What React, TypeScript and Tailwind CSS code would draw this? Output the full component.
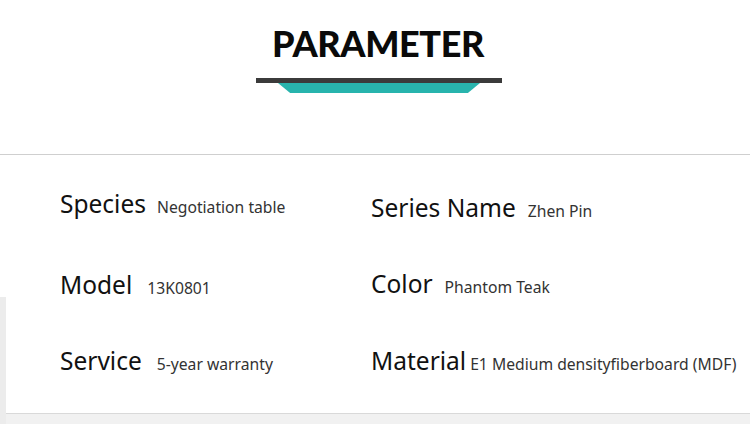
import React from "react";

const label = "font-['Noto_Sans',sans-serif] text-[24.5px] leading-[32px] text-[#111]";
const value = "font-['Noto_Sans',sans-serif] text-[15.7px] leading-[32px] text-[#333]";

function Cell({ k, v, gap, className = "" }: { k: string; v: string; gap: string; className?: string }) {
  return (
    <div className={`flex items-baseline ${className}`}>
      <span className={label}>{k}</span>
      <span className={`${value} ${gap}`}>{v}</span>
    </div>
  );
}

export default function App() {
  return (
    <div className="w-[750px] h-[424px] bg-white overflow-hidden flex flex-col">
      <div className="h-[155px] border-b border-[#cfcfcf] shrink-0">
        <div className="ml-[256px] w-[246px] flex flex-col items-center pt-[25px]">
          <h1 className="font-['Lato',sans-serif] font-black text-[36px] leading-[36px] text-[#0a0a0a] tracking-[-0.4px] ml-[-2px]">
            PARAMETER
          </h1>
          <div className="mt-[17px] w-full h-[5px] bg-[#3b3b3b]" />
          <div className="w-[202px] h-[10px] bg-[#28b4ad] [clip-path:polygon(0_0,100%_0,94%_100%,6%_100%)]" />
        </div>
      </div>
      <div className="flex-1 flex">
        <div className="w-[6px] flex flex-col">
          <div className="h-[142px] bg-white" />
          <div className="flex-1 bg-[#ececec]" />
        </div>
        <div className="flex-1 flex flex-col">
          <div className="h-[259px] bg-white border-b border-[#d9d9d9] pl-[54px] pt-[33px]">
            <div className="grid grid-cols-[311px_1fr]">
              <Cell k="Species" v="Negotiation table" gap="ml-[11px]" className="h-[81px]" />
              <Cell k="Series Name" v="Zhen Pin" gap="ml-[12px]" className="h-[81px] pt-[4px]" />
              <Cell k="Model" v="13K0801" gap="ml-[15px]" className="h-[76px]" />
              <Cell k="Color" v="Phantom Teak" gap="ml-[12px]" className="h-[76px] -mt-[1px]" />
              <Cell k="Service" v="5-year warranty" gap="ml-[15px]" />
              <Cell k="Material" v="E1 Medium densityfiberboard (MDF)" gap="ml-[4px]" />
            </div>
          </div>
          <div className="flex-1 bg-[#f1f1f1]" />
        </div>
      </div>
    </div>
  );
}
